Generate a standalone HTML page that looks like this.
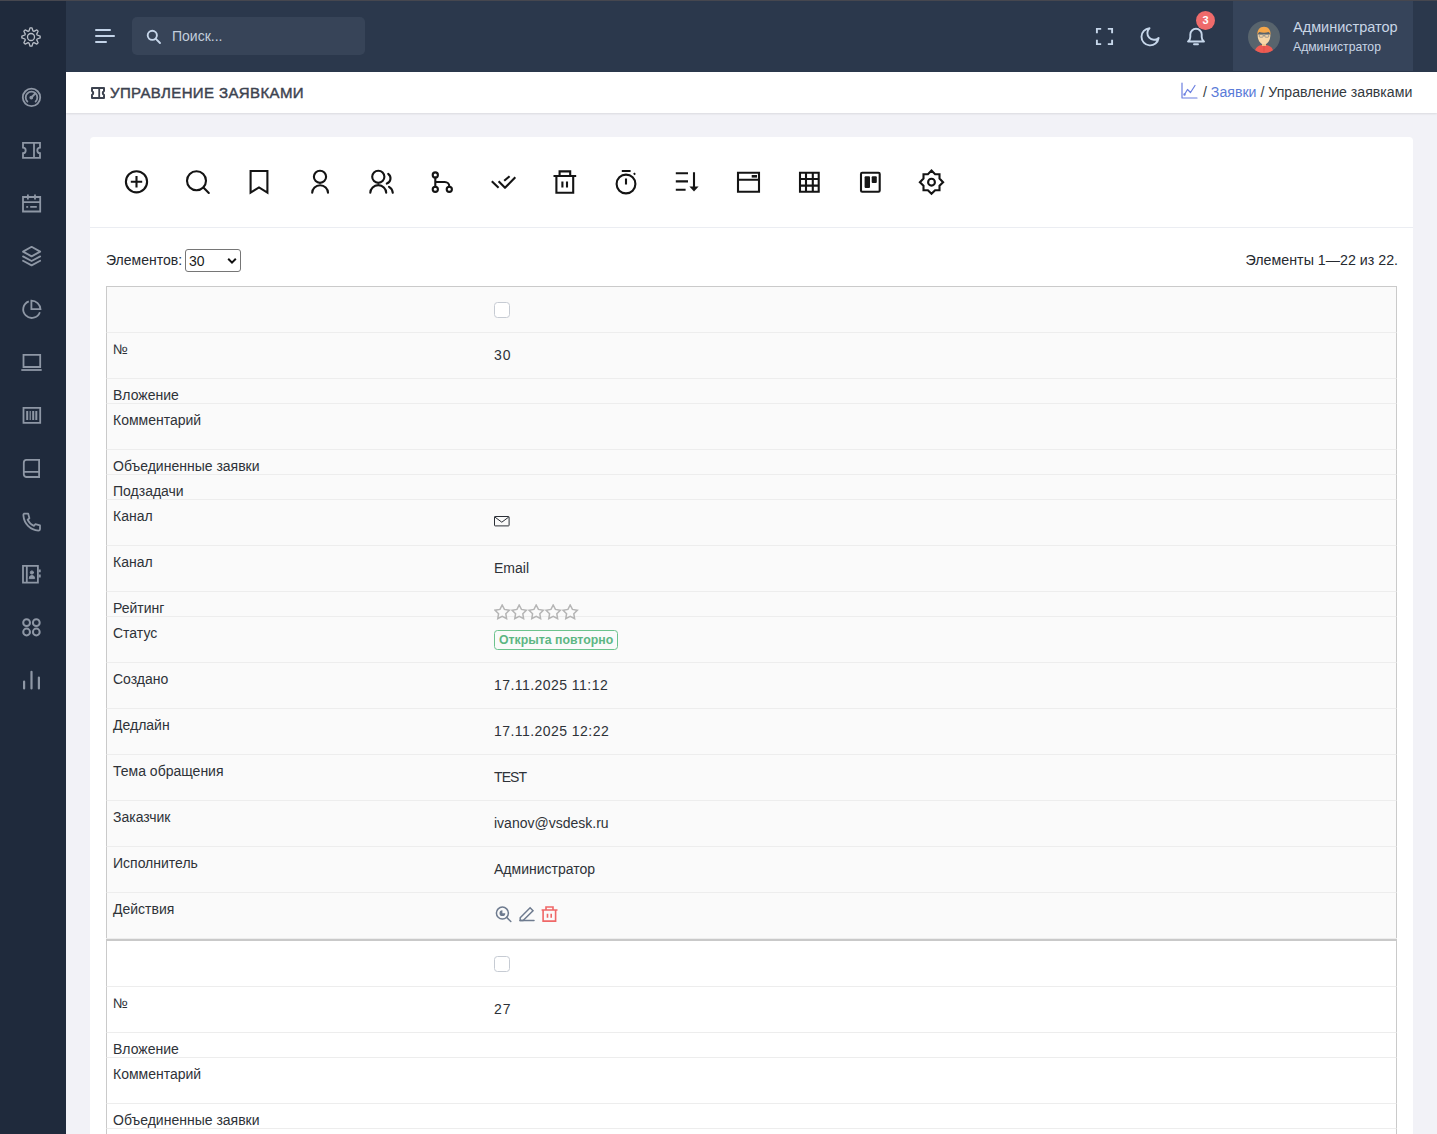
<!DOCTYPE html>
<html lang="ru">
<head>
<meta charset="utf-8">
<title>Управление заявками</title>
<style>
*{box-sizing:border-box;margin:0;padding:0}
html,body{width:1437px;height:1134px;overflow:hidden}
body{font-family:"Liberation Sans",sans-serif;background:#f2f2f7;position:relative;color:#212529}
.abs{position:absolute}
#topline{position:absolute;left:0;top:0;width:1437px;height:1px;background:#46474f}
#sidebar{position:absolute;left:0;top:1px;width:66px;height:1133px;background:#1f2a3c}
#header{position:absolute;left:66px;top:1px;width:1371px;height:71px;background:#2b384c}
#titlebar{position:absolute;left:66px;top:72px;width:1371px;height:41px;background:#fff;box-shadow:0 1px 2px rgba(0,0,0,.10)}
#card{position:absolute;left:90px;top:137px;width:1323px;height:1100px;background:#fff;border-radius:4px}

#tbl{position:absolute;left:106px;top:0;width:1291px;height:1134px}
.tr{position:absolute;left:0;width:1291px;border-top:1px solid #ededed;border-left:1px solid #cacaca;border-right:1px solid #cacaca}
.tr:first-child{border-top-color:#cacaca}
.lb{position:absolute;left:6px;top:6px;font-size:14px;line-height:20px;color:#2e3238;white-space:nowrap}
.vl{position:absolute;left:387px;top:12px;font-size:14px;line-height:20px;color:#2e3238;white-space:nowrap}
.ic{position:absolute;left:387px}
.cb{position:absolute;left:387px;top:15px;width:16px;height:16px;border:1px solid #c6cbd3;border-radius:3.5px;background:#fff}
.badge{position:absolute;left:387px;top:13px;height:20px;padding:0 4px 0 4px;border:1px solid #6cc28d;border-radius:3.5px;color:#5db683;font-size:12.3px;line-height:18px;font-weight:700;white-space:nowrap}
.sep{position:absolute;left:0;width:1291px;height:3px;border-top:1px solid #ededed;background:#c9c9c9;z-index:2}
</style>
</head>
<body>
<div id="topline"></div>
<div id="sidebar"><svg width="66" height="1133" viewBox="0 1 66 1133" style="position:absolute;left:0;top:0" fill="none" stroke-linecap="round" stroke-linejoin="round">
<g stroke="#b9bec7" stroke-width="1.3"><path d="M37.08 35.00 L40.16 36.10 L40.16 37.90 L37.08 39.00 L36.71 39.89 L38.11 42.84 L36.84 44.11 L33.89 42.71 L33.00 43.08 L31.90 46.16 L30.10 46.16 L29.00 43.08 L28.11 42.71 L25.16 44.11 L23.89 42.84 L25.29 39.89 L24.92 39.00 L21.84 37.90 L21.84 36.10 L24.92 35.00 L25.29 34.11 L23.89 31.16 L25.16 29.89 L28.11 31.29 L29.00 30.92 L30.10 27.84 L31.90 27.84 L33.00 30.92 L33.89 31.29 L36.84 29.89 L38.11 31.16 L36.71 34.11Z"/><circle cx="31" cy="37" r="3.5"/></g>
<g stroke="#8e97a5" stroke-width="1.8">
 <circle cx="31.5" cy="97.4" r="8.7"/>
 <path d="M27.4 101.6A5.8 5.8 0 1 1 35.6 101.6"/>
 <path d="M31.3 97.6L35.2 93.5" stroke-width="2"/><circle cx="31.3" cy="97.6" r="1" fill="#8e97a5"/>
 <path d="M23 142.9H40V147.7A2.7 2.7 0 0 0 40 153.1V157.9H23V153.1A2.7 2.7 0 0 0 23 147.7Z" stroke-linejoin="miter" stroke-linecap="butt"/>
 <path d="M34 143V158" stroke-linecap="butt"/>
 <path d="M23 197H40.2V211.5H23Z M23 202.2H40.2" stroke-linejoin="miter"/>
 <path d="M27.9 194.5V199.4M35 194.5V199.4M30.2 206.9H36.8" stroke-linecap="butt"/><path d="M27 206.9H27.4" />
 <path d="M31.6 246.8L40.2 251.6L31.6 256.4L23 251.6Z"/>
 <path d="M23 256.4L31.6 261L40.2 256.4M23 260.8L31.6 265.4L40.2 260.8"/>
 <path d="M28.8 301.3A8.6 8.6 0 1 0 39.9 312.3" stroke-linecap="butt"/>
 <path d="M31.4 300.6V309.2H40.5A9.3 9.3 0 0 0 31.4 300.6Z" stroke-linejoin="miter"/>
 <path d="M23.5 354.9H40.2V367H23.5Z" stroke-linejoin="miter"/>
 <path d="M21.3 370H41.7" stroke-linecap="butt"/>
 <path d="M23.5 407.9H40.2V422.9H23.5Z" stroke-linejoin="miter"/>
 <path d="M27.2 411V420M33.2 411V420M36.3 411V420" stroke-width="2" stroke-linecap="butt"/><path d="M30.2 411V420" stroke-width="1.2" stroke-linecap="butt"/>
 <path d="M39.1 459.9V477H26.2A2.8 2.8 0 0 1 23.8 474.4V462.6A2.8 2.8 0 0 1 26.4 459.9Z M23.8 471.8H39.1" stroke-linejoin="miter"/>
 <path d="M24.2 513.6H28.2L29.4 518.3L27.6 519.7C28.9 522.5 31.1 524.7 33.9 525.9L35.3 524.2L40 525.4V529.2A1.6 1.6 0 0 1 38.4 530.6C30.2 530 24 523.7 23.4 515.4A1.6 1.6 0 0 1 24.2 513.6Z"/>
 <path d="M23 565.8H37.9V582.6H23Z M26.8 566V582.4" stroke-linejoin="miter"/>
 <path d="M39.7 569.5V572.3M39.7 574.6V577.6" stroke-width="2" stroke-linecap="butt"/>
 <circle cx="31.9" cy="572.5" r="1.6" fill="#8e97a5" stroke-width="1"/>
 <path d="M29.2 578.2A2.7 2.7 0 0 1 34.6 578.2Z" fill="#8e97a5" stroke-width="1"/>
 <circle cx="26.6" cy="622.7" r="3.4" stroke-width="2"/><circle cx="36.3" cy="622.7" r="3.4" stroke-width="2"/><circle cx="26.6" cy="632" r="3.4" stroke-width="2"/><circle cx="36.3" cy="632" r="3.4" stroke-width="2"/>
 <path d="M24.1 681.5V688.5M31.5 671.8V688.5M38.9 677.5V688.5" stroke-width="2.2"/>
</g></svg></div>
<div id="header">
 <svg class="abs" style="left:29px;top:26px" width="22" height="17" viewBox="0 0 22 17"><g fill="#c3d3e8"><rect x="0" y="2" width="16" height="2" rx="1"/><rect x="0" y="8" width="20" height="2" rx="1"/><rect x="0" y="14" width="12" height="2" rx="1"/></g></svg>
 <div class="abs" id="search" style="left:66px;top:16px;width:233px;height:38px;background:#374458;border-radius:5px"></div>
 <svg class="abs" style="left:80px;top:27.5px" width="16" height="16" viewBox="0 0 16 16"><circle cx="6.3" cy="6.3" r="4.6" fill="none" stroke="#c6d6ea" stroke-width="1.9"/><path d="M9.6 9.6 L14 14" stroke="#c6d6ea" stroke-width="1.9" stroke-linecap="round"/></svg>
 <div class="abs" style="left:106px;top:26px;font-size:14px;line-height:18px;color:#c3cedc">Поиск...</div>
 <svg class="abs" style="left:1029px;top:26px" width="19" height="19" viewBox="0 0 20 20" fill="none" stroke="#c6d6ea" stroke-width="2"><path d="M2 6.5V2h4.5M13.5 2H18v4.5M18 13.5V18h-4.5M6.5 18H2v-4.5"/></svg>
 <svg class="abs" style="left:1073px;top:24.5px" width="22" height="22" viewBox="0 0 22 22" fill="none" stroke="#c6d6ea" stroke-width="1.9" stroke-linejoin="round"><path d="M10.5 2.2A8.6 8.6 0 1 0 19.6 12 6.6 6.6 0 0 1 10.5 2.2Z"/></svg>
 <svg class="abs" style="left:1119px;top:24px" width="22" height="22" viewBox="0 0 22 22" fill="none" stroke="#c6d6ea" stroke-width="1.9" stroke-linejoin="round" stroke-linecap="round"><path d="M3 16.5h16c-1.5-1-2.3-2.4-2.3-4.5V9.5A5.7 5.7 0 0 0 5.3 9.5V12c0 2.1-.8 3.5-2.3 4.5Z"/><path d="M9 19.3h4"/></svg>
 <div class="abs" style="left:1130px;top:10px;width:19px;height:19px;border-radius:50%;background:#ef6b6b;color:#fff;font-size:11px;line-height:19px;text-align:center;font-weight:700">3</div>
 <div class="abs" id="user" style="left:1167px;top:0;width:180px;height:70px;background:#36445a">
  <svg class="abs" style="left:15px;top:20px" width="32" height="32" viewBox="0 0 32 32"><defs><clipPath id="avc"><circle cx="16" cy="16" r="16"/></clipPath></defs><circle cx="16" cy="16" r="16" fill="#58646d"/><g clip-path="url(#avc)"><path d="M6.3 33c0-5.6 3.6-9.3 9.7-9.3s9.7 3.7 9.7 9.3Z" fill="#ef5b52"/><path d="M16 23.7v9.3" stroke="#d84c45" stroke-width=".6"/></g><rect x="14" y="20" width="4" height="5" fill="#f2c186"/><path d="M9.6 13.5c0 6.2 2.9 9.8 6.4 9.8s6.4-3.6 6.4-9.8Z" fill="#f8d7a8"/><path d="M9.4 14.2c-.3-5.3 2.2-8.4 6.6-8.4s6.9 3.1 6.6 8.4c-.5-1.6-1.2-2.7-2-3.2-2.5 1-6.5 1-9.2 0-.8.5-1.5 1.6-2 3.2Z" fill="#f5a64a"/><g fill="none" stroke="#8a8a8a" stroke-width=".8"><rect x="11.3" y="13.6" width="3.8" height="2.6" rx=".7"/><rect x="16.9" y="13.6" width="3.8" height="2.6" rx=".7"/><path d="M15.1 14.6h1.8"/></g></svg>
  <div class="abs" style="left:60px;top:17.3px;font-size:14.5px;line-height:18px;color:#c9d6e6;white-space:nowrap">Администратор</div>
  <div class="abs" style="left:60px;top:39px;font-size:12.2px;line-height:15px;color:#c9d6e6;white-space:nowrap">Администратор</div>
</div>
</div>
<div id="titlebar">
  <svg class="abs" style="left:25px;top:15px" width="14" height="12" viewBox="0 0 14 12"><path d="M1 1h12v3.1a2.1 2.1 0 0 0 0 3.8V11H1V7.9a2.1 2.1 0 0 0 0-3.8Z" fill="none" stroke="#3d4350" stroke-width="2" stroke-linejoin="round"/><path d="M8.2 1.5v9" stroke="#3d4350" stroke-width="1.8"/></svg>
  <div class="abs" style="left:44px;top:12px;font-size:15px;line-height:18px;letter-spacing:.38px;-webkit-text-stroke:.45px #3d4350;color:#3d4350;white-space:nowrap">УПРАВЛЕНИЕ ЗАЯВКАМИ</div>
  <svg class="abs" style="left:1115px;top:10px" width="17" height="17" viewBox="0 0 17 17" fill="none" stroke="#6b7fe0" stroke-width="1.2" stroke-linecap="round" stroke-linejoin="round"><path d="M1 1v15h15"/><path d="M3.5 12.5l3-5 3 3 4.5-7"/><circle cx="3.5" cy="12.5" r=".6"/></svg>
  <div class="abs" style="left:1137px;top:12px;font-size:14.15px;line-height:17px;color:#343a40;white-space:nowrap">/ <span style="color:#5a7bd8">Заявки</span> / Управление заявками</div>
</div>
<div id="card">
<div class="abs" style="left:0;top:90px;width:1323px;height:1px;background:#ebedf2"></div>
<svg class="abs" style="left:0;top:0" width="900" height="89" viewBox="90 137 900 89" fill="none" stroke="#141414" stroke-width="2.1" stroke-linecap="round" stroke-linejoin="round">
 <circle cx="136.5" cy="181.8" r="10.6"/><path d="M130.8 181.8H142.2M136.5 176.1V187.5" stroke-linecap="butt"/>
 <circle cx="196.5" cy="180.7" r="9.5"/><path d="M203.4 187.6L208.8 193"/>
 <path d="M250.6 171H267.4V192.6L259 187.4L250.6 192.6Z" stroke-linecap="butt" stroke-linejoin="miter"/>
 <circle cx="320" cy="176.8" r="6.1"/><path d="M312.2 192.8A7.9 7.6 0 0 1 328 192.8"/>
 <circle cx="378.3" cy="176.8" r="6.1"/><path d="M370.3 192.8A7.9 7.6 0 0 1 386.2 192.8"/>
 <path d="M388.2 173.8A5.6 5.6 0 0 1 386.8 183.6"/><path d="M389 186.8A7.6 7.6 0 0 1 392.8 192.8"/>
 <circle cx="435.3" cy="175" r="2.6"/><circle cx="435.3" cy="189.3" r="2.6"/><circle cx="449.3" cy="189.3" r="2.6"/>
 <path d="M435.3 177.6V186.7M435.3 182H444.8A4.5 4.5 0 0 1 449.3 186.5"/>
 <path d="M491.8 181.3L498.6 187.8M498.6 181.3L505 187.8L515.3 177.2M504.2 180.8L509.6 176.2" stroke-linecap="butt"/>
 <path d="M553.5 176H576.2M556.4 176V192.8H573.2V176M559.6 176V171.4H570.2V176M562.4 181.5V187.6M567 181.5V187.6" stroke-linecap="butt" stroke-linejoin="miter"/>
 <circle cx="626" cy="184" r="9.4"/><path d="M621.8 171H630.6M626 178.4V184.4M633.8 174.5L635.2 173.3" stroke-linecap="butt"/>
 <path d="M675.8 173.3H688M675.8 181.4H688M675.8 189.7H685.6M694 172.3V187" stroke-linecap="butt"/>
 <path d="M689.4 186.4H698.6L694 191.6Z" fill="#161616" stroke="none"/>
 <path d="M738 172.7H759V191.7H738Z M738 179.7H759" stroke-linejoin="miter"/>
 <rect x="751.7" y="175" width="5.3" height="2.6" fill="#161616" stroke="none"/>
 <path d="M800 172.7H818.7V191.7H800Z M806 172.7V191.7M812.8 172.7V191.7M800 179H818.7M800 185.6H818.7" stroke-linejoin="miter" stroke-linecap="butt"/>
 <rect x="861" y="172.7" width="18.7" height="19" rx="1.2"/>
 <rect x="864.6" y="176.2" width="5.4" height="11.8" rx="1" fill="#161616" stroke="none"/>
 <rect x="871.7" y="176.2" width="5.1" height="6.9" rx="1" fill="#161616" stroke="none"/>
 <path d="M931.5 170.6 L935.1 174.2 L939.5 174.2 L939.5 178.6 L943.1 182.2 L939.5 185.8 L939.5 190.2 L935.1 190.2 L931.5 193.8 L927.9 190.2 L923.5 190.2 L923.5 185.8 L919.9 182.2 L923.5 178.6 L923.5 174.2 L927.9 174.2Z" stroke-linejoin="miter"/>
 <circle cx="931.5" cy="182.2" r="3.4"/>
</svg>
</div>
<div class="abs" style="left:106px;top:251px;font-size:14px;line-height:18px;color:#262a30;white-space:nowrap">Элементов:</div>
<div class="abs" style="left:185px;top:249px;width:56px;height:23px;border:1px solid #767676;border-radius:3px;background:#fff"><span style="position:absolute;left:3px;top:2px;font-size:14px;line-height:18px;color:#1a1a1a">30</span><svg style="position:absolute;left:41px;top:7px" width="10" height="8" viewBox="0 0 10 8"><path d="M1.2 1.8L5 5.6L8.8 1.8" fill="none" stroke="#111" stroke-width="2"/></svg></div>
<div class="abs" style="left:1245.5px;top:251px;font-size:14.25px;line-height:18px;color:#262a30;white-space:nowrap">Элементы 1—22 из 22.</div>
<div id="tbl">
<div class="tr" style="top:286px;height:46px;background:#fafafa">
<div class="cb"></div>
</div>
<div class="tr" style="top:332px;height:46px;background:#fafafa">
<div class="lb">№</div>
<div class="vl" style="letter-spacing:1px">30</div>
</div>
<div class="tr" style="top:378px;height:25px;background:#fafafa">
<div class="lb">Вложение</div>
</div>
<div class="tr" style="top:403px;height:46px;background:#fafafa">
<div class="lb">Комментарий</div>
</div>
<div class="tr" style="top:449px;height:25px;background:#fafafa">
<div class="lb">Объединенные заявки</div>
</div>
<div class="tr" style="top:474px;height:25px;background:#fafafa">
<div class="lb">Подзадачи</div>
</div>
<div class="tr" style="top:499px;height:46px;background:#fafafa">
<div class="lb">Канал</div>
<div class="ic" style="top:16px;width:16px;height:11px"><svg width="16" height="11" viewBox="0 0 16 11" style="position:absolute;left:0;top:0" fill="none" stroke="#2b2f36" stroke-width="1" stroke-linejoin="round"><rect x=".5" y=".5" width="14.6" height="9.4" rx=".6"/><path d="M.8 1L7.8 6.2L14.8 1"/></svg></div>
</div>
<div class="tr" style="top:545px;height:46px;background:#fafafa">
<div class="lb">Канал</div>
<div class="vl">Email</div>
</div>
<div class="tr" style="top:591px;height:25px;background:#fafafa">
<div class="lb">Рейтинг</div>
<div class="ic" style="top:12px;width:90px;height:18px;z-index:3"><svg width="90" height="18" viewBox="0 0 90 18" style="position:absolute;left:0;top:0"><path d="M8.20 1.00 L10.43 5.43 L15.33 6.18 L11.81 9.67 L12.61 14.57 L8.20 12.30 L3.79 14.57 L4.59 9.67 L1.07 6.18 L5.97 5.43Z M25.20 1.00 L27.43 5.43 L32.33 6.18 L28.81 9.67 L29.61 14.57 L25.20 12.30 L20.79 14.57 L21.59 9.67 L18.07 6.18 L22.97 5.43Z M42.20 1.00 L44.43 5.43 L49.33 6.18 L45.81 9.67 L46.61 14.57 L42.20 12.30 L37.79 14.57 L38.59 9.67 L35.07 6.18 L39.97 5.43Z M59.20 1.00 L61.43 5.43 L66.33 6.18 L62.81 9.67 L63.61 14.57 L59.20 12.30 L54.79 14.57 L55.59 9.67 L52.07 6.18 L56.97 5.43Z M76.20 1.00 L78.43 5.43 L83.33 6.18 L79.81 9.67 L80.61 14.57 L76.20 12.30 L71.79 14.57 L72.59 9.67 L69.07 6.18 L73.97 5.43Z" fill="none" stroke="#b5b5b5" stroke-width="1.5" stroke-linejoin="miter"/></svg></div>
</div>
<div class="tr" style="top:616px;height:46px;background:#fafafa">
<div class="lb">Статус</div>
<div class="badge">Открыта повторно</div>
</div>
<div class="tr" style="top:662px;height:46px;background:#fafafa">
<div class="lb">Создано</div>
<div class="vl" style="letter-spacing:.45px">17.11.2025 11:12</div>
</div>
<div class="tr" style="top:708px;height:46px;background:#fafafa">
<div class="lb">Дедлайн</div>
<div class="vl" style="letter-spacing:.45px">17.11.2025 12:22</div>
</div>
<div class="tr" style="top:754px;height:46px;background:#fafafa">
<div class="lb">Тема обращения</div>
<div class="vl" style="letter-spacing:-.9px">TEST</div>
</div>
<div class="tr" style="top:800px;height:46px;background:#fafafa">
<div class="lb">Заказчик</div>
<div class="vl">ivanov@vsdesk.ru</div>
</div>
<div class="tr" style="top:846px;height:46px;background:#fafafa">
<div class="lb">Исполнитель</div>
<div class="vl">Администратор</div>
</div>
<div class="tr" style="top:892px;height:46px;background:#fafafa">
<div class="lb">Действия</div>
<div class="ic" style="top:13px;width:70px;height:18px"><svg width="70" height="18" viewBox="0 0 70 18" style="position:absolute;left:0;top:0" fill="none" stroke-linecap="round" stroke-linejoin="round">
<g stroke="#6e7b8f" stroke-width="1.5"><circle cx="8.4" cy="7.1" r="6"/><path d="M12.7 11.4L16.8 15.5"/></g>
<path d="M8.4 4.3A2.9 2.9 0 1 0 11.3 7.2H8.4Z" fill="#6e7b8f"/>
<g stroke="#6e7b8f" stroke-width="1.5" stroke-linejoin="miter"><path d="M26 14.6H40"/><path d="M26.2 14.6V11.7L36.1 1.8L39 4.7L29.1 14.6Z"/></g>
<g stroke="#ef6767" stroke-width="1.6" stroke-linecap="butt" stroke-linejoin="miter"><path d="M47.6 4H63.5M49.1 4V15.1H61.6V4M52 4V1H59V4M53.5 7.7V11.8M57.2 7.7V11.8"/></g>
</svg></div>
</div>
<div class="sep" style="top:938px"></div>
<div class="tr" style="top:940px;height:46px;background:#fff">
<div class="cb"></div>
</div>
<div class="tr" style="top:986px;height:46px;background:#fff">
<div class="lb">№</div>
<div class="vl" style="letter-spacing:1px">27</div>
</div>
<div class="tr" style="top:1032px;height:25px;background:#fff">
<div class="lb">Вложение</div>
</div>
<div class="tr" style="top:1057px;height:46px;background:#fff">
<div class="lb">Комментарий</div>
</div>
<div class="tr" style="top:1103px;height:25px;background:#fff">
<div class="lb">Объединенные заявки</div>
</div>
<div class="tr" style="top:1128px;height:25px;background:#fff">
<div class="lb">Подзадачи</div>
</div>
</div>
</body>
</html>
